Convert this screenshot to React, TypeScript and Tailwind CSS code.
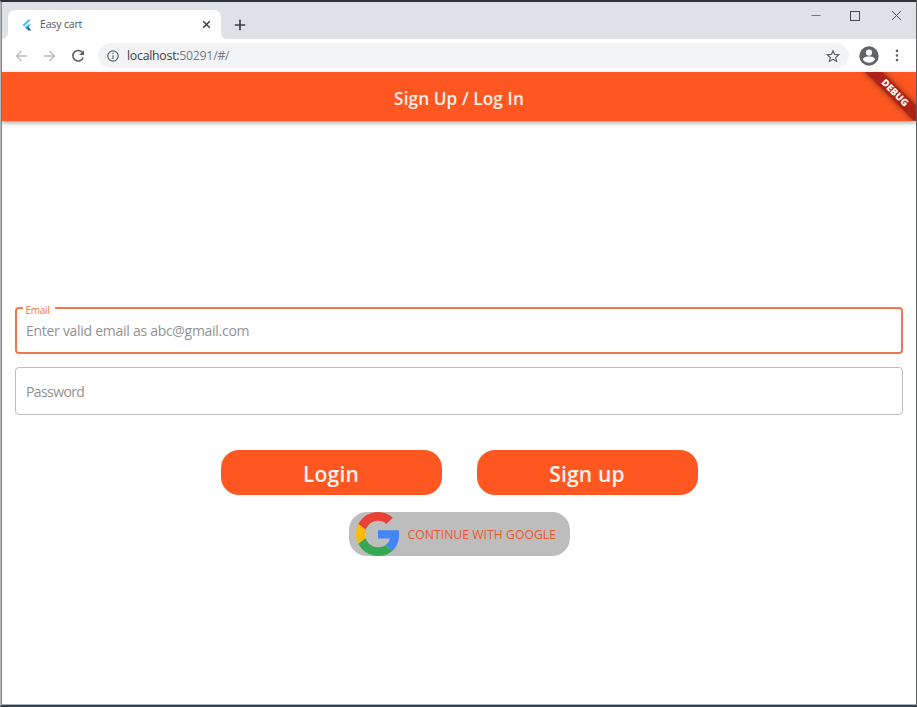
import React from "react";

function FlutterIcon() {
  return (
    <svg width="10" height="12" viewBox="0 0 10 12" className="shrink-0">
      <path d="M6 0.6 L0.4 6 L2.2 7.8 L9.2 0.6 Z" fill="#54c5f8" />
      <path d="M6.2 5.5 L2.7 8.6 L4.4 10.2 L9.2 5.5 Z" fill="#4bb8ee" />
      <path d="M4.6 9 L6.2 7.6 L9.2 11.4 L6.2 11.4 Z" fill="#1b62a5" />
    </svg>
  );
}

function TabStrip() {
  return (
    <div className="flex h-[37px] items-start bg-[#dee1e6]">
      <div className="flex h-[29px] w-[6px] shrink-0 self-end items-end bg-white">
        <div className="h-full w-full rounded-br-[6px] bg-[#dee1e6]" />
      </div>
      <div className="flex h-[29px] w-[213px] shrink-0 items-center self-end rounded-t-[7px] bg-white pl-[14px] pr-[10px]">
        <FlutterIcon />
        <span className="ml-[8px] text-[10.5px] leading-none tracking-[-0.15px] text-[#505357]">Easy cart</span>
        <svg width="9" height="9" viewBox="0 0 9 9" className="ml-auto">
          <path d="M1.2 1.2 L7.8 7.8 M7.8 1.2 L1.2 7.8" stroke="#3c4043" strokeWidth="1.5" />
        </svg>
      </div>
      <div className="flex h-[29px] flex-1 self-end bg-white">
        <div className="flex h-full flex-1 items-center rounded-bl-[6px] bg-[#dee1e6] pl-[13px]">
          <svg width="12" height="12" viewBox="0 0 12 12">
            <path d="M6 0.8 V11.2 M0.8 6 H11.2" stroke="#3c4043" strokeWidth="1.7" />
          </svg>
        </div>
      </div>
      <div className="flex h-[27px] items-center bg-[#dee1e6] pr-[14px]">
        <svg width="12" height="12" viewBox="0 0 12 12">
          <path d="M1.5 5.5 H10.5" stroke="#74777b" />
        </svg>
        <svg width="12" height="12" viewBox="0 0 12 12" className="ml-[27px]">
          <rect x="1.5" y="1.5" width="9" height="9" fill="none" stroke="#44464a" />
        </svg>
        <svg width="11" height="12" viewBox="0 0 11 12" className="ml-[30px]">
          <path d="M1 1 L10 10 M10 1 L1 10" stroke="#505256" />
        </svg>
      </div>
    </div>
  );
}

function Toolbar() {
  return (
    <div className="flex h-[33px] items-center bg-white">
      <svg width="13" height="12" viewBox="0 0 13 12" className="ml-[13px]" fill="none" stroke="#b9bbbe" strokeWidth="1.3">
        <path d="M12 6 H1.5 M6.5 1 L1.5 6 L6.5 11" />
      </svg>
      <svg width="13" height="12" viewBox="0 0 13 12" className="ml-[15px]" fill="none" stroke="#b9bbbe" strokeWidth="1.3">
        <path d="M1 6 H11.5 M6.5 1 L11.5 6 L6.5 11" />
      </svg>
      <svg width="14" height="14" viewBox="0 0 14 14" className="ml-[15px]">
        <path d="M11.8 4.1 A5.3 5.3 0 1 0 12.2 8.4" fill="none" stroke="#5a5d61" strokeWidth="1.5" />
        <path d="M13 1.2 V6.1 H8.1 Z" fill="#5a5d61" />
      </svg>
      <div className="ml-[13px] flex h-[25px] w-[751px] items-center rounded-full bg-[#f1f3f4] pl-[9px] pr-[9px]">
        <svg width="12" height="12" viewBox="0 0 12 12">
          <circle cx="6" cy="6" r="5.2" fill="none" stroke="#5f6368" strokeWidth="1.2" />
          <path d="M6 5.2 V9 M6 2.8 V4.1" stroke="#5f6368" strokeWidth="1.2" />
        </svg>
        <span className="ml-[8px] pt-[1px] text-[12.3px] leading-none tracking-[-0.25px] text-[#3c4043]">
          localhost:<span className="text-[#777b7f]">50291/#/</span>
        </span>
        <svg width="14" height="14" viewBox="0 0 24 24" className="ml-auto" fill="none" stroke="#5f6368" strokeWidth="2">
          <path d="M12 2.8 L14.8 9.2 L21.8 9.9 L16.5 14.5 L18.1 21.3 L12 17.7 L5.9 21.3 L7.5 14.5 L2.2 9.9 L9.2 9.2 Z" />
        </svg>
      </div>
      <svg width="20" height="20" viewBox="0 0 20 20" className="ml-[9.5px]">
        <circle cx="10" cy="10" r="9.7" fill="#5f6368" />
        <circle cx="10" cy="6.6" r="3.1" fill="#fff" />
        <path d="M3.9 13.6 C4.1 10.9 8 10.5 10 10.5 S15.9 10.9 16.1 13.6 C14.6 15.8 12.4 16.8 10 16.8 S5.4 15.8 3.9 13.6Z" fill="#fff" />
      </svg>
      <svg width="4" height="13" viewBox="0 0 4 13" className="ml-[16.5px]" fill="#5f6368">
        <circle cx="2" cy="1.9" r="1.3" />
        <circle cx="2" cy="6.5" r="1.3" />
        <circle cx="2" cy="11.1" r="1.3" />
      </svg>
    </div>
  );
}

function AppBar() {
  return (
    <header className="relative flex h-[49px] shrink-0 items-center justify-center bg-[#ff5722] shadow-[0_2px_4px_rgba(0,0,0,0.35)]">
      <h1 className="pt-[4px] text-[17.2px] font-[650] leading-none tracking-[0.1px] text-[#fff0e9]">Sign Up / Log In</h1>
      <div className="absolute right-0 top-0 h-[49px] w-[60px] overflow-hidden">
        <div className="absolute left-[-1px] top-[15px] flex h-[11.5px] w-[80px] rotate-45 items-center justify-center bg-[#ad231a] shadow-[0_0_6px_rgba(0,0,0,0.5)]">
          <span className="text-[9.7px] font-extrabold leading-none tracking-[0.1px] text-[#fff3ee]">DEBUG</span>
        </div>
      </div>
    </header>
  );
}

function GoogleLogo() {
  return (
    <svg width="44" height="44" viewBox="0 0 48 48" className="shrink-0">
      <path fill="#EA4335" d="M24 9.5c3.54 0 6.71 1.22 9.21 3.6l6.85-6.85C35.9 2.38 30.47 0 24 0 14.62 0 6.51 5.38 2.56 13.22l7.98 6.19C12.43 13.72 17.74 9.5 24 9.5z" />
      <path fill="#4285F4" d="M46.98 24.55c0-1.57-.15-3.09-.38-4.55H24v9.02h12.94c-.58 2.96-2.26 5.48-4.78 7.18l7.73 6c4.51-4.18 7.09-10.36 7.09-17.65z" />
      <path fill="#FBBC05" d="M10.53 28.59c-.48-1.45-.76-2.99-.76-4.59s.27-3.14.76-4.59l-7.98-6.19C.92 16.46 0 20.12 0 24c0 3.88.92 7.54 2.56 10.78l7.97-6.19z" />
      <path fill="#34A853" d="M24 48c6.48 0 11.93-2.13 15.89-5.81l-7.73-6c-2.15 1.45-4.92 2.3-8.16 2.3-6.26 0-11.57-4.22-13.47-9.91l-7.98 6.19C6.51 42.62 14.62 48 24 48z" />
    </svg>
  );
}

function LoginForm() {
  return (
    <main className="flex flex-1 flex-col pl-[13px] pr-[13px] pt-[185.5px]">
      <div className="relative flex h-[47.5px] items-center rounded-[4px] border-2 border-[#f0764f] pl-[9px]">
        <span className="absolute left-[6px] top-[-5px] bg-white pl-[2.5px] pr-[5.5px] text-[10px] leading-[12px] tracking-[-0.25px] text-[#f0714b]">Email</span>
        <span className="pt-[1px] text-[14px] leading-none tracking-[-0.28px] text-[#929292]">Enter valid email as abc@gmail.com</span>
      </div>
      <div className="mt-[13px] flex h-[48px] items-center rounded-[4px] border border-[#bdbdbd] pl-[10px]">
        <span className="pt-[2px] text-[14px] leading-none tracking-[-0.6px] text-[#929292]">Password</span>
      </div>
      <div className="mt-[35px] flex justify-center gap-[35px]">
        <button className="h-[44.5px] w-[221px] rounded-[18px] bg-[#ff5722] pt-[4px] text-[21px] font-[650] leading-none tracking-[0.2px] text-[#fff3ed]">Login</button>
        <button className="h-[44.5px] w-[221px] rounded-[18px] bg-[#ff5722] pt-[4px] text-[21px] font-[650] leading-none tracking-[0.2px] text-[#fff3ed]">Sign up</button>
      </div>
      <button className="mt-[17.5px] flex h-[44px] w-[221px] items-center self-center rounded-[18px] bg-[#bdbdbd] pl-[7px]">
        <GoogleLogo />
        <span className="ml-[8px] whitespace-nowrap pt-[2px] text-[12.2px] font-medium leading-none tracking-[0.04px] text-[#f0552b]">CONTINUE WITH GOOGLE</span>
      </button>
    </main>
  );
}

export default function App() {
  return (
    <div className="h-[707px] w-[917px] overflow-hidden border-b-[2px] border-l border-r border-t-2 border-b-[#35434f] border-l-[#b5b5b5] border-r-[#5b5e61] border-t-[#2d3238] font-['Open_Sans',sans-serif]">
      <div className="flex h-full flex-col border-b border-l border-b-[#a8b0b5] border-l-[#8a8a8a] bg-white">
        <TabStrip />
        <Toolbar />
        <AppBar />
        <LoginForm />
      </div>
    </div>
  );
}
